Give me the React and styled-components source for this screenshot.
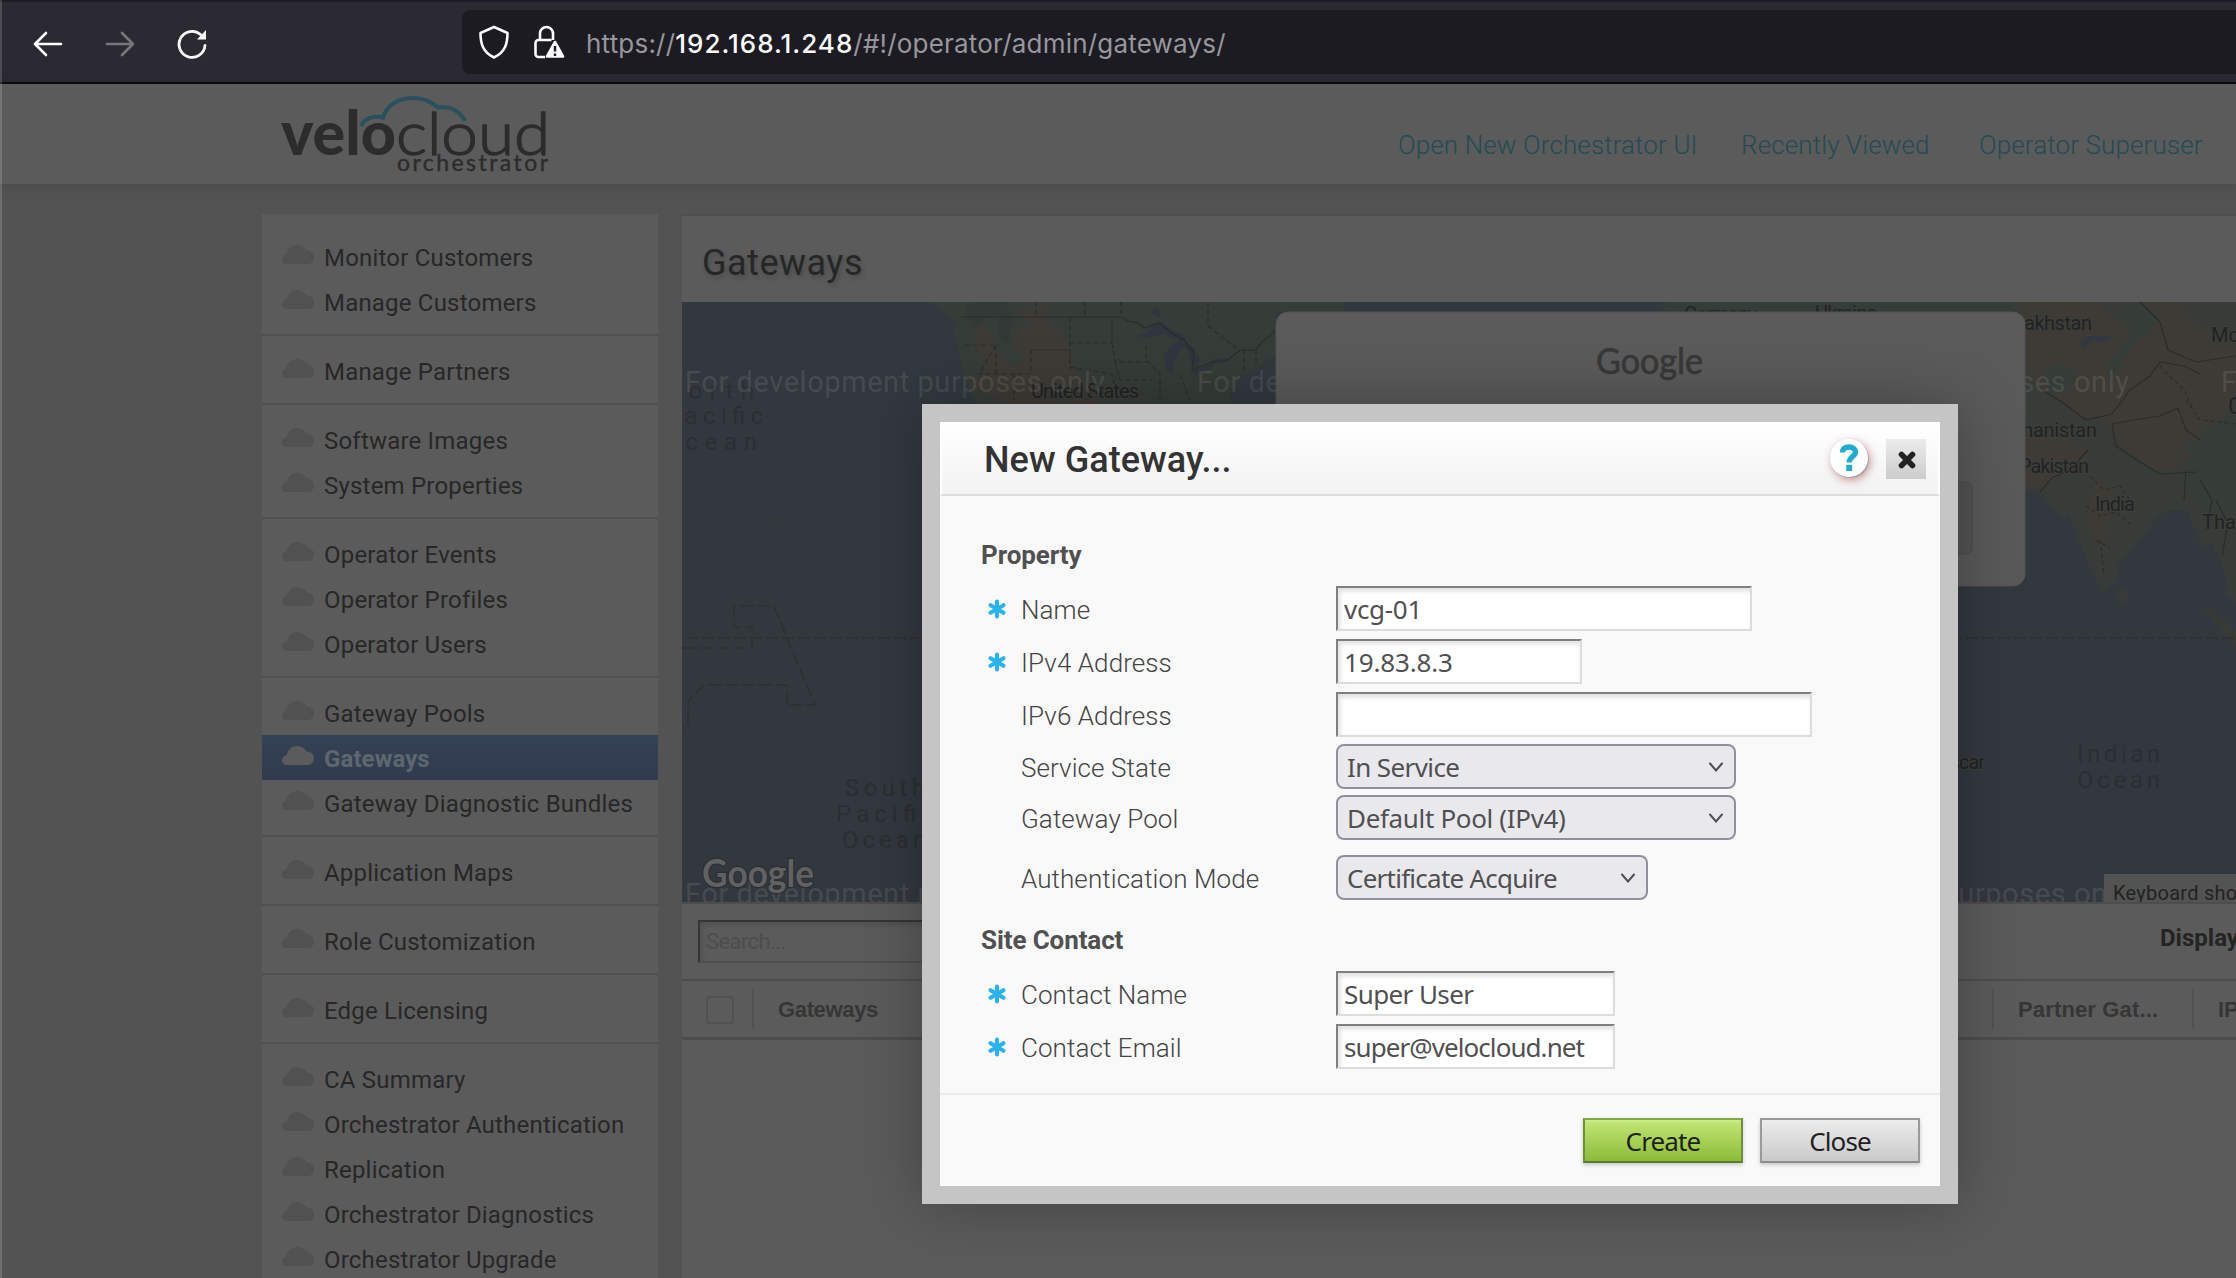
import React from "react";
import styled, { createGlobalStyle, css } from "styled-components";

const roboto = `Roboto, "Liberation Sans", sans-serif`;
const humanist = `"Noto Sans", "Open Sans", sans-serif`;
const grotesk = `"Liberation Sans", Arial, sans-serif`;

const GlobalStyle = createGlobalStyle`
  *, *::before, *::after { box-sizing: border-box; }
  html, body { margin: 0; padding: 0; overflow: hidden; }
  body { background: #535353; font-family: ${roboto}; }
`;

const Page = styled.div`
  position: relative;
  display: flex;
  flex-direction: column;
  width: 2236px;
  height: 1278px;
  overflow: hidden;
  background: #535353;
`;

const WindowEdge = styled.div`
  position: absolute;
  inset: 0 auto 0 0;
  width: 2px;
  background: rgba(255, 255, 255, 0.16);
`;

/* ---------- Browser chrome ---------- */

const BrowserBar = styled.div`
  display: flex;
  align-items: center;
  flex: none;
  height: 84px;
  padding-left: 32px;
  background: #2b2a33;
  border-top: 2px solid #1d1c23;
  border-bottom: 2px solid #0c0c0e;
`;

const NavIcons = styled.div`
  display: flex;
  gap: 40px;
  width: 430px;
  padding-top: 3px;
`;

const UrlBar = styled.div`
  display: flex;
  align-items: center;
  flex: 1;
  height: 64px;
  padding-left: 14px;
  border-radius: 8px 0 0 8px;
  background: #1c1b22;
`;

const UrlIcon = styled.svg`
  flex: none;
  margin-right: ${(p) => p.$gap}px;
`;

const UrlText = styled.div`
  padding-top: 3px;
  font: 400 26px/32px Inter, ${roboto};
  letter-spacing: 0.2px;
  color: #97969d;
  white-space: nowrap;
  strong {
    font-weight: 500;
    letter-spacing: 1px;
    color: #fbfbfe;
  }
`;

/* ---------- Page header ---------- */

const Header = styled.header`
  display: flex;
  justify-content: space-between;
  flex: none;
  height: 100px;
  padding-left: 278px;
  background: #5b5b5b;
  box-shadow: 0 2px 14px rgba(0, 0, 0, 0.14);
`;

const TopNav = styled.nav`
  display: flex;
  width: 838px;
  padding-top: 46px;
`;

const TopLink = styled.a`
  width: ${(p) => p.$width}px;
  font: 300 26px/30px ${roboto};
  letter-spacing: 0.12px;
  color: #224b55;
  white-space: nowrap;
`;

/* ---------- Body ---------- */

const Body = styled.div`
  display: flex;
  flex: 1;
  min-height: 0;
  padding: 30px 0 0 262px;
  gap: 24px;
`;

const Sidebar = styled.aside`
  flex: none;
  width: 396px;
  padding-top: 8px;
  background: #5b5b5b;
`;

const Group = styled.ul`
  margin: 0;
  padding: 12px 0 10px;
  list-style: none;
  & + & {
    border-top: 2px solid #505050;
  }
`;

const Item = styled.li`
  display: flex;
  align-items: center;
  height: 45px;
  padding: 4px 0 0 20px;
  gap: 10px;
  font: ${(p) => (p.$active ? 700 : 400)} 24px/41px ${roboto};
  letter-spacing: ${(p) => (p.$active ? 0.1 : 0.2)}px;
  color: ${(p) => (p.$active ? "#5f666f" : "#272727")};
  background: ${(p) => (p.$active ? "linear-gradient(#334254, #313b4e)" : "none")};
  white-space: nowrap;
  svg {
    flex: none;
    margin-top: -8px;
    fill: ${(p) => (p.$active ? "#5b5b5b" : "#515151")};
  }
`;

const Main = styled.main`
  display: flex;
  flex-direction: column;
  flex: 1;
  min-width: 0;
  border-top: 2px solid #4f4f4f;
  background: #5b5b5b;
`;

const TitleBar = styled.div`
  height: 86px;
  padding: 26px 0 0 20px;
  h1 {
    margin: 0;
    font: 400 36px/42px ${roboto};
    letter-spacing: 0.5px;
    color: #262626;
    text-shadow: 2px 3px 5px rgba(0, 0, 0, 0.2);
  }
`;

const MapSvg = styled.svg`
  display: block;
  flex: none;
  background: #33383f;
`;

const FilterRow = styled.div`
  display: flex;
  align-items: flex-start;
  justify-content: space-between;
  flex: none;
  height: 79px;
  padding: 16px 0 0 16px;
  border-top: 2px solid #4d4d4d;
  border-bottom: 2px solid #4d4d4d;
`;

const SearchInput = styled.input`
  width: 320px;
  height: 43px;
  padding: 0 6px;
  border: 2px solid #4f4f4f;
  border-top-color: #353535;
  border-left-color: #353535;
  box-shadow: inset 2px 3px 5px rgba(0, 0, 0, 0.12);
  background: transparent;
  font: 400 22px/30px ${roboto};
  letter-spacing: -0.6px;
  &::placeholder {
    color: #4d4d4d;
    opacity: 1;
  }
`;

const DisplayLabel = styled.div`
  width: 76px;
  padding-top: 3px;
  overflow: hidden;
  font: 700 24px/30px ${roboto};
  color: #242424;
  white-space: nowrap;
`;

const ColumnHeads = styled.div`
  display: flex;
  align-items: center;
  flex: none;
  height: 59px;
  border-bottom: 3px solid #4d4d4d;
`;

const Checkbox = styled.span`
  flex: none;
  width: 28px;
  height: 28px;
  margin: 2px 18px 0 24px;
  border: 2px solid #515151;
  border-radius: 3px;
`;

const Column = styled.div`
  width: ${(p) => p.$width}px;
  height: 40px;
  flex: none;
  padding: 2px 0 0 24px;
  border-left: 2px solid #515151;
  overflow: hidden;
  font: 700 22px/38px ${grotesk};
  letter-spacing: ${(p) => p.$spacing || 0}px;
  color: #363636;
  white-space: nowrap;
`;

/* ---------- Dialog ---------- */

const Dialog = styled.section`
  position: absolute;
  left: 922px;
  top: 404px;
  display: flex;
  flex-direction: column;
  width: 1036px;
  height: 800px;
  border: 18px solid #c5c5c5;
  background: #f9f9f9;
  box-shadow: 0 0 60px rgba(0, 0, 0, 0.28);
`;

const DialogHead = styled.div`
  display: flex;
  align-items: flex-start;
  flex: none;
  height: 74px;
  padding: 17px 12px 0 42px;
  border: 2px solid #fff;
  border-top: 0;
  border-bottom-color: #dcdcdc;
  background: linear-gradient(#ffffff, #f2f2f2);
  h2 {
    flex: 1;
    margin: 0;
    font: 500 36px/42px ${roboto};
    letter-spacing: 0.05px;
    color: #333;
  }
`;

const HelpButton = styled.button`
  display: flex;
  align-items: center;
  justify-content: center;
  width: 38px;
  height: 38px;
  margin: 0 18px 0 0;
  padding: 0;
  border: 0;
  border-radius: 50%;
  background: #fff;
  box-shadow: 2px 3px 9px rgba(150, 40, 40, 0.5), 1px 1px 0 rgba(30, 173, 209, 0.35);
`;

const CloseX = styled.button`
  display: flex;
  align-items: center;
  justify-content: center;
  width: 40px;
  height: 40px;
  padding: 2px 0 0 1px;
  border: 0;
  background: linear-gradient(#ececec, #cccccc);
`;

const Form = styled.div`
  flex: none;
  height: 597px;
  padding: 44px 41px 0;
`;

const SectionTitle = styled.h3`
  height: 30px;
  margin: ${(p) => p.$top || 0}px 0 16px;
  font: 700 26px/30px ${roboto};
  letter-spacing: -0.1px;
  color: #505050;
`;

const Row = styled.div`
  display: grid;
  grid-template-columns: 40px 315px auto;
  align-items: center;
  justify-content: start;
  height: 45px;
  margin-bottom: ${(p) => (p.$gap === undefined ? 8 : p.$gap)}px;
`;

const Star = styled.svg`
  margin-left: 7px;
`;

const Label = styled.label`
  padding-top: 2px;
  font: 300 26px/30px ${roboto};
  letter-spacing: 0.08px;
  color: #444;
`;

const field = css`
  width: ${(p) => p.$width}px;
  height: 45px;
  font: 400 26px/36px ${humanist};
  letter-spacing: ${(p) => p.$spacing || 0}px;
  color: #505050;
`;

const TextInput = styled.input`
  ${field}
  padding: 0 0 0 6px;
  border: 2px solid #dcdcdc;
  border-top-color: #7f7f7f;
  border-left-color: #7f7f7f;
  border-radius: 0;
  outline: 0;
  background: #fff;
  box-shadow: inset 2px 3px 5px rgba(0, 0, 0, 0.13);
`;

const Select = styled.div`
  ${field}
  display: flex;
  align-items: center;
  justify-content: space-between;
  padding: 0 10px 0 9px;
  border: 2px solid #8f8f9d;
  border-radius: 8px;
  background: #e9e9ed;
  white-space: nowrap;
`;

const DialogFoot = styled.div`
  display: flex;
  justify-content: flex-end;
  gap: 17px;
  padding: 23px 20px 0 0;
  border-top: 2px solid #ebebeb;
`;

const Button = styled.button`
  width: 160px;
  height: 45px;
  padding: 0;
  font: 400 26px/36px ${humanist};
  letter-spacing: -0.85px;
  color: #1f1f1f;
  box-shadow: 0 2px 4px rgba(0, 0, 0, 0.2);
  border: 2px solid ${(p) => (p.$primary ? "#6f8f3a" : "#9a9a9a")};
  border-top-color: ${(p) => (p.$primary ? "#86a84c" : "#9a9a9a")};
  border-bottom-color: ${(p) => (p.$primary ? "#5c7a2b" : "#8c8c8c")};
  background: ${(p) =>
    p.$primary ? "linear-gradient(#cdf08a 0, #bde370 4px, #8cbb38)" : "linear-gradient(#ececec, #cacaca)"};
`;

/* ---------- Drawings ---------- */

const CloudIcon = () => (
  <svg width="32" height="19" viewBox="0 0 32 19">
    <path d="M5 19C2 19 0 16.800 0 14.200C0 11.500 2 9.600 4.600 9.200C5.800 4 9.600 0 15 0C19.400 0 22.600 2.200 24.600 5.600C28.800 5.600 32 8.600 32 12.500C32 16.200 29.200 19 25.600 19Z" />
  </svg>
);

const Logo = () => (
  <svg width="272" height="96" viewBox="278 84 272 96">
    <g fill="#2c2c2c">
      <text x="281" y="155" fontFamily="Lato" fontWeight="900" fontSize="60" textLength="115" lengthAdjust="spacingAndGlyphs">velo</text>
      <text x="396" y="155" fontFamily="Lato" fontWeight="300" fontSize="60" stroke="#2c2c2c" strokeWidth="1.400" textLength="154" lengthAdjust="spacingAndGlyphs">cloud</text>
      <text x="397" y="171" fontFamily="Lato" fontWeight="400" fontSize="23" stroke="#2c2c2c" strokeWidth="0.400" textLength="151">orchestrator</text>
    </g>
    <path d="M361 126C364 119 373 115 383 117.500C387 104 400 98 413 98C424 98 432 102 438 107.500C450 105 461 112 465 121" fill="none" stroke="#285061" strokeWidth="4" />
  </svg>
);

const BackArrow = ({ flip, color }) => (
  <svg width="32" height="32" viewBox="0 0 32 32" fill="none" stroke={color} strokeWidth="2.600" strokeLinecap="round" strokeLinejoin="round">
    <path d={flip ? "M3 16H29M18 5L29 16L18 27" : "M29 16H3M14 5L3 16L14 27"} />
  </svg>
);

const Chevron = () => (
  <svg width="16" height="10" viewBox="0 0 16 10" fill="none" stroke="#505050" strokeWidth="2" strokeLinecap="round">
    <path d="M2 1.500L8 8.500L14 1.500" />
  </svg>
);

const Required = () => (
  <Star width="18" height="20" viewBox="-9 -10 18 20" stroke="#27b4ec" strokeWidth="4" strokeLinecap="round">
    <path d="M0 -7.500V7.500M-6.500 -3.800L6.500 3.800M-6.500 3.800L6.500 -3.800" />
  </Star>
);

const Watermark = ({ x, y }) => (
  <text x={x} y={y} fontSize="29" fontWeight="400" fill="#fff" fillOpacity="0.1" textLength="420">
    For development purposes only
  </text>
);

const WorldMap = () => (
  <MapSvg width="1554" height="600" viewBox="682 302 1554 600" fontFamily={roboto}>
    <defs>
      <linearGradient id="panel" x1="0" y1="0" x2="0" y2="1">
        <stop offset="0" stopColor="#5b5b5b" />
        <stop offset="1" stopColor="#595959" />
      </linearGradient>
    </defs>

    {/* North America */}
    <path fill="#363c38" d="M932 302L944 313L957 323L953 334L957 347L961 360L963 375L970 392L977 406H1230L1231 392L1240 378L1252 369L1263 364L1276 355V302Z" />
    <g fill="#3e3a36">
      <path d="M1018 311L1030 308L1042 314L1050 322L1060 330L1068 342L1072 356L1075 368L1082 380L1098 392L1100 406H1070L1060 396L1048 404H1010L992 396L972 388L968 376L980 378L984 360L974 345L972 330L982 322L992 336L996 350L1010 362L1016 368L1024 356L1012 346L1016 330L1030 326Z" />
      <path d="M1030 302H1046L1050 312L1036 310Z" />
    </g>
    <path fill="#323936" d="M965 305L980 302H1005L1012 320L1008 345L1000 338L996 316L985 318L975 330L970 322Z" />
    <g fill="#31353f">
      <path d="M1137 336L1147 332L1153 324L1162 322L1172 330L1184 335L1186 342L1174 338L1162 334L1150 338Z" />
      <path d="M1164 354L1172 346L1180 340L1188 344L1180 350L1174 360L1172 374L1166 372Z" />
      <path d="M1184 344L1194 348L1200 360L1196 370L1190 360L1188 352Z" />
      <path d="M1190 372L1206 366L1214 362L1212 368L1196 376Z" />
      <path d="M1212 360L1226 358L1228 362L1214 364Z" />
      <path d="M1154 306L1162 312L1158 318L1152 314Z" />
    </g>
    <path d="M962 317H1121L1128 321L1138 323L1144 328L1159 323L1170 332L1184 340L1194 352L1192 370L1212 362L1228 360L1240 350H1256L1262 342L1276 330" fill="none" stroke="#2a2d2b" strokeWidth="1.200" />
    <path d="M1036 302V317M1085 302V317M1121 302V314M1208 302V326L1236 348M1070 317V365M1070 343H1112V318M1112 343L1115 362H1148M1115 362L1120 380H1152M1031 350H1070V370M1031 350V374H979L996 345L965 345M996 345V374M1014 374V400M1070 367L1112 374L1118 400M1180 375L1190 400M1146 345V360L1160 374V400M1244 350V372M1256 350V366" fill="none" stroke="#2b2e2c" strokeWidth="1.200" strokeDasharray="5 3" />

    {/* Northern Europe strip */}
    <path fill="#363c38" d="M1260 302H1344V312H1260ZM1668 302H2025V312H1660Z" />
    <g fontSize="20" fill="#232525">
      <text x="1684" y="321" textLength="73">Germany</text>
      <text x="1815" y="320" textLength="62">Ukraine</text>
    </g>

    {/* Asia */}
    <path fill="#373c38" d="M2020 302H2236V604L2230 600L2222 590L2228 588L2222 564L2212 543L2203 548L2194 528L2187 510L2169 510L2156 518L2138 543L2119 563L2118 580L2103 593L2091 570L2080 543L2069 515L2060 518L2042 493L2020 489Z" />
    <g fill="#3e3b36">
      <path d="M2020 302H2100L2110 316L2126 324L2140 308L2150 302H2180L2190 322L2210 330L2236 334V400L2220 420L2200 432L2196 452L2178 466L2156 472L2134 456L2116 440L2110 424L2092 420L2070 414L2060 400L2040 392L2030 372L2020 360Z" />
      <path d="M2020 424L2044 430L2070 440L2090 452L2084 470L2060 478L2040 488L2020 486Z" />
      <path d="M2096 480L2116 486L2110 520L2100 556L2094 540L2086 520L2090 500Z" />
    </g>
    <g fill="#363c37">
      <path d="M2124 310L2142 304L2160 314L2150 332L2136 344L2126 356L2112 380L2104 370L2118 352L2130 334Z" />
      <path d="M2040 372L2060 362L2078 372L2070 390L2052 396Z" />
      <path d="M2180 446L2200 438L2220 420L2236 410V510L2210 520L2194 500L2186 476L2196 462Z" />
    </g>
    <path fill="#323842" d="M2080 342L2088 336H2112L2108 341H2092L2084 348Z" />
    <path fill="#373b36" d="M2121 585L2128 592L2127 602L2119 604L2116 596ZM2203 607L2212 609L2224 620L2236 632V648L2226 636L2214 622Z" />
    <path d="M2042 390L2062 402L2086 420L2112 414L2130 390L2150 376L2160 362L2184 366L2200 374M2112 424L2134 420L2160 416L2178 408L2186 430L2200 440M2112 424L2116 446L2140 462L2160 474L2196 472M2088 450L2070 470L2052 478L2040 492M2186 470L2184 500M2200 480L2212 500L2206 530M2216 500L2228 524L2222 556M2140 302L2160 322L2168 350L2196 362L2236 356" fill="none" stroke="#2a2c2b" strokeWidth="1.200" />
    <path d="M2090 476L2104 490L2120 486L2130 500M2086 506L2100 516L2116 512L2130 524M2096 540L2110 548M2160 366L2184 390L2194 410M2186 400L2200 420L2236 424M2100 540L2104 576" fill="none" stroke="#2b2e2c" strokeWidth="1.200" strokeDasharray="4 3" />
    <g fontSize="20" fill="#212222" stroke="#3c3f3c" strokeWidth="2" paintOrder="stroke">
      <text x="1992" y="330" textLength="100">Kazakhstan</text>
      <text x="2211" y="342">Mongolia</text>
      <text x="1992" y="437" textLength="105">Afghanistan</text>
      <text x="2019" y="473" textLength="70">Pakistan</text>
      <text x="2095" y="511" textLength="40">India</text>
      <text x="2202" y="529">Thailand</text>
      <text x="2228" y="414" fontSize="23">China</text>
      <text x="1031" y="398" textLength="108">United States</text>
      <text x="1884" y="769" textLength="101">Madagascar</text>
    </g>

    {/* Equator and date line */}
    <g fill="none" stroke="#2f2f31">
      <path d="M686 638H2236" strokeWidth="1.600" strokeDasharray="12 4" />
      <path d="M682 648H752V627H734V606H774L815 705H787V685H703L688 701V724L682 729" strokeWidth="1.500" strokeDasharray="13 4" />
    </g>
    <path fill="#373a38" d="M774 520L779 524L775 527Z" />

    {/* Ocean names */}
    <g fontSize="24" fill="#2b2e33">
      <text x="664" y="399" textLength="90">North</text>
      <text x="664" y="424" textLength="99">Pacific</text>
      <text x="662" y="450" textLength="95">Ocean</text>
      <text x="845" y="796" textLength="80">South</text>
      <text x="836" y="822" textLength="98">Pacific</text>
      <text x="842" y="848" textLength="84">Ocean</text>
      <text x="2077" y="762" textLength="83">Indian</text>
      <text x="2077" y="788" textLength="83">Ocean</text>
    </g>

    <Watermark x="685" y="392" />
    <Watermark x="1197" y="392" />
    <Watermark x="1709" y="392" />
    <Watermark x="2221" y="392" />
    <Watermark x="685" y="904" />
    <Watermark x="1197" y="904" />
    <Watermark x="1709" y="904" />
    <g fontFamily="Lato" fontSize="38">
      <text x="702" y="887" fontWeight="700" fill="#616161" stroke="#2b2d31" strokeWidth="2.400" paintOrder="stroke" textLength="112" lengthAdjust="spacingAndGlyphs">Google</text>
    </g>

    {/* Load-failure notice */}
    <rect x="1276" y="312" width="749" height="274" rx="12" fill="url(#panel)" stroke="#535353" />
    <text x="1596" y="374" fontFamily="Lato" fontSize="36" fill="#383838" stroke="#383838" strokeWidth="0.600" textLength="107" lengthAdjust="spacingAndGlyphs">Google</text>
    <rect x="1840" y="482" width="132" height="72" rx="6" fill="#535353" stroke="#4c4c4c" />

    <rect x="2104" y="874" width="132" height="28" fill="#535353" />
    <text x="2113" y="900" fontSize="20" fill="#222" textLength="178">Keyboard shortcuts</text>
  </MapSvg>
);

const menu = [
  ["Monitor Customers", "Manage Customers"],
  ["Manage Partners"],
  ["Software Images", "System Properties"],
  ["Operator Events", "Operator Profiles", "Operator Users"],
  ["Gateway Pools", "Gateways", "Gateway Diagnostic Bundles"],
  ["Application Maps"],
  ["Role Customization"],
  ["Edge Licensing"],
  ["CA Summary", "Orchestrator Authentication", "Replication", "Orchestrator Diagnostics", "Orchestrator Upgrade"],
];

export default function App() {
  return (
    <Page>
      <GlobalStyle />
      <BrowserBar>
        <NavIcons>
          <BackArrow color="#fbfbfe" />
          <BackArrow flip color="#77767d" />
          <svg width="32" height="32" viewBox="0 0 32 32" fill="none" stroke="#fbfbfe" strokeWidth="2.800" strokeLinecap="round">
            <path d="M29 17.500A13 13 0 1 1 24.500 6.500" />
            <path d="M30 2V11.500H21Z" fill="#fbfbfe" stroke="none" />
          </svg>
        </NavIcons>
        <UrlBar>
          <UrlIcon $gap={19} width="36" height="36" viewBox="0 0 36 36" fill="none" stroke="#fbfbfe" strokeWidth="2.600" strokeLinejoin="round">
            <path d="M18 3L31.500 9C31.500 19 29.500 28 18 33.500C6.500 28 4.500 19 4.500 9Z" />
          </UrlIcon>
          <UrlIcon $gap={21} width="34" height="36" viewBox="0 0 34 36" fill="none" stroke="#fbfbfe" strokeWidth="2.600">
            <path d="M9 16V9.500A6.500 6.500 0 0 1 22 9.500V16M14 33H7.500A3 3 0 0 1 4.500 30V19A3 3 0 0 1 7.500 16H20.500" />
            <path d="M24 18L32 32.500H16Z" fill="#fbfbfe" strokeLinejoin="round" />
            <path d="M24 22V27.500M24 29.500V32" stroke="#1c1b22" strokeWidth="2.400" />
          </UrlIcon>
          <UrlText>
            https://<strong>192.168.1.248</strong>/#!/operator/admin/gateways/
          </UrlText>
        </UrlBar>
      </BrowserBar>

      <Header>
        <Logo />
        <TopNav>
          <TopLink $width={343}>Open New Orchestrator UI</TopLink>
          <TopLink $width={238}>Recently Viewed</TopLink>
          <TopLink $width={240}>Operator Superuser</TopLink>
        </TopNav>
      </Header>

      <Body>
        <Sidebar>
          {menu.map((items) => (
            <Group key={items[0]}>
              {items.map((name) => (
                <Item key={name} $active={name === "Gateways"}>
                  <CloudIcon />
                  {name}
                </Item>
              ))}
            </Group>
          ))}
        </Sidebar>

        <Main>
          <TitleBar>
            <h1>Gateways</h1>
          </TitleBar>
          <WorldMap />
          <FilterRow>
            <SearchInput placeholder="Search..." />
            <DisplayLabel>Display</DisplayLabel>
          </FilterRow>
          <ColumnHeads>
            <Checkbox />
            <Column $width={1240} $spacing={-0.35}>Gateways</Column>
            <Column $width={200} $spacing={0.15}>Partner Gat...</Column>
            <Column $width={100}>IP Address</Column>
          </ColumnHeads>
        </Main>
      </Body>

      <Dialog>
        <DialogHead>
          <h2>New Gateway...</h2>
          <HelpButton>
            <svg width="18" height="28" viewBox="0 0 18 28" fill="none" stroke="#1eadd1" strokeWidth="5.400">
              <path d="M2.500 8.500C2.500 5 5 3 9 3C13 3 15.500 5.200 15.500 8.200C15.500 12.500 9.200 12.500 9.200 18.500" />
              <path d="M9.200 20.800V27" strokeWidth="6" />
            </svg>
          </HelpButton>
          <CloseX>
            <svg width="20" height="20" viewBox="0 0 20 20" stroke="#222" strokeWidth="5.600" strokeLinecap="round">
              <path d="M4.500 4.500L15.500 15.500M15.500 4.500L4.500 15.500" />
            </svg>
          </CloseX>
        </DialogHead>
        <Form>
          <SectionTitle>Property</SectionTitle>
          <Row>
            <Required />
            <Label>Name</Label>
            <TextInput $width={416} $spacing={-0.3} readOnly value="vcg-01" />
          </Row>
          <Row>
            <Required />
            <Label>IPv4 Address</Label>
            <TextInput $width={246} $spacing={-0.15} readOnly value="19.83.8.3" />
          </Row>
          <Row $gap={7}>
            <span />
            <Label>IPv6 Address</Label>
            <TextInput $width={476} readOnly value="" />
          </Row>
          <Row $gap={6}>
            <span />
            <Label>Service State</Label>
            <Select $width={400} $spacing={-0.6}>In Service<Chevron /></Select>
          </Row>
          <Row $gap={15}>
            <span />
            <Label>Gateway Pool</Label>
            <Select $width={400} $spacing={-0.34}>Default Pool (IPv4)<Chevron /></Select>
          </Row>
          <Row $gap={0}>
            <span />
            <Label>Authentication Mode</Label>
            <Select $width={312} $spacing={-0.75}>Certificate Acquire<Chevron /></Select>
          </Row>
          <SectionTitle $top={25}>Site Contact</SectionTitle>
          <Row>
            <Required />
            <Label>Contact Name</Label>
            <TextInput $width={279} $spacing={-0.6} readOnly value="Super User" />
          </Row>
          <Row $gap={0}>
            <Required />
            <Label>Contact Email</Label>
            <TextInput $width={279} $spacing={-0.93} readOnly value="super@velocloud.net" />
          </Row>
        </Form>
        <DialogFoot>
          <Button $primary>Create</Button>
          <Button>Close</Button>
        </DialogFoot>
      </Dialog>
      <WindowEdge />
    </Page>
  );
}
